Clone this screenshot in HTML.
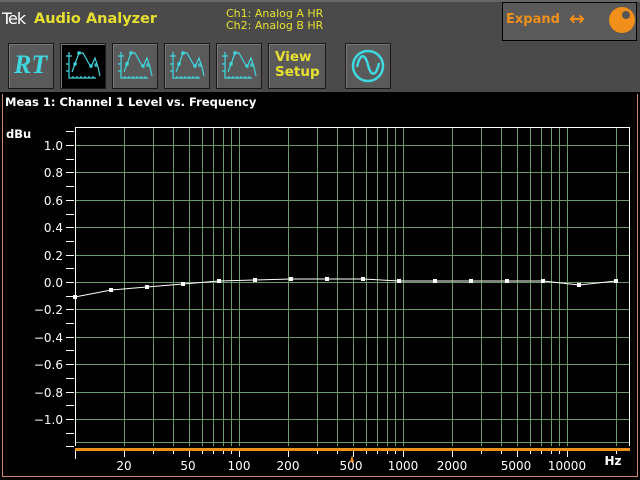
<!DOCTYPE html>
<html><head><style>
body{margin:0;width:640px;height:480px;background:#4a4a4a;overflow:hidden;font-family:"DejaVu Sans","Liberation Sans",sans-serif;position:relative}
.b{position:absolute;top:43px;width:44px;height:44px;background:#5a5a5a;border:1px solid #1a1a1a;box-shadow:inset 1px 1px 0 #777}
.t{position:absolute;color:#e8e030;font-size:12px}
</style></head><body>
<div style="position:absolute;left:0;top:0;width:640px;height:2px;background:#666"></div>
<div style="position:absolute;left:2px;top:9px;color:#fff;font-size:16px;letter-spacing:-1px">Tek</div>
<div class="t" style="left:34px;top:11px;font-size:14.5px;font-weight:bold">Audio Analyzer</div>
<div class="t" style="left:226px;top:8px;line-height:12px;font-size:11px">Ch1: Analog A HR<br>Ch2: Analog B HR</div>
<div style="position:absolute;left:502px;top:2px;width:133px;height:37px;background:#5a5a5a;border:1px solid #000"></div>
<div style="position:absolute;left:506px;top:12px;color:#f0901a;font-size:13px;font-weight:bold">Expand</div>
<div style="position:absolute;left:569px;top:8px;color:#f0901a;font-size:19px;font-weight:bold">↔</div>
<div style="position:absolute;left:609px;top:7px;width:26px;height:26px;border-radius:50%;background:#f0901a"></div>
<div style="position:absolute;left:622px;top:11px;width:8px;height:8px;border-radius:50%;background:#555"></div>

<div class="b" style="left:8px"><div style="position:absolute;left:5px;top:6px;color:#40d8e0;font:italic bold 26px 'Liberation Serif',serif">RT</div></div>
<div class="b" style="left:60px;background:#000"></div>
<div class="b" style="left:112px"></div>
<div class="b" style="left:164px"></div>
<div class="b" style="left:216px"></div>
<div class="b" style="left:268px;width:56px"><div style="position:absolute;left:6px;top:6px;color:#e8e030;font-weight:bold;font-size:13.5px;line-height:15px">View<br>Setup</div></div>
<div class="b" style="left:345px"></div>
<svg width="640" height="100" style="position:absolute;left:0;top:0">
<g fill="none" stroke="#40d8e0" stroke-width="1.2">
<g id="ic"><path d="M69 52V78H96M73 78v-2M77 78v-2M81 78v-2M85 78v-2M89 78v-2M93 78v-2M66 56h6M66 64h3M66 71h3"/><path d="M72 72L75 64 79 53 83 53 88 62 91 67 95 58 98 67 100 76"/><rect x="78" y="52" width="2" height="2"/><rect x="74" y="63" width="2" height="2"/><rect x="90" y="65" width="2" height="2"/><rect x="95" y="64" width="2" height="2"/></g>
<use href="#ic" x="52"/><use href="#ic" x="104"/><use href="#ic" x="156"/>
<circle cx="368" cy="66" r="15" stroke-width="2.5"/><path d="M357 67c3-14 8-14 11-2s8 12 11-2" stroke-width="2.5"/>
</g></svg>

<div style="position:absolute;left:0;top:92px;width:640px;height:388px;background:#000"></div>
<div style="position:absolute;left:2px;top:94px;width:634px;height:382px;border:1px solid #d08a70;border-top:none"></div>
<div style="position:absolute;left:5px;top:95px;color:#fff;font-size:11.5px;font-weight:bold">Meas 1: Channel 1 Level vs. Frequency</div>
<svg width="640" height="480" style="position:absolute;left:0;top:0;font-family:'DejaVu Sans',sans-serif">
<g stroke="#6a9a6a" stroke-width="1">
<path d="M124.5 127V446M153.5 127V446M173.5 127V446M189.5 127V446M202.5 127V446M213.5 127V446M223.5 127V446M231.5 127V446M239.5 127V446M288.5 127V446M317.5 127V446M337.5 127V446M353.5 127V446M366.5 127V446M377.5 127V446M387.5 127V446M395.5 127V446M403.5 127V446M452.5 127V446M481.5 127V446M501.5 127V446M517.5 127V446M530.5 127V446M541.5 127V446M551.5 127V446M559.5 127V446M567.5 127V446M616.5 127V446"/>
<path d="M75 145.5H629M75 172.5H629M75 200.5H629M75 227.5H629M75 255.5H629M75 282.5H629M75 309.5H629M75 337.5H629M75 364.5H629M75 392.5H629M75 419.5H629M75 442.5H629"/>
</g>
<path d="M75.5 446V127.5H629.5V446" fill="none" stroke="#fff"/>
<rect x="75" y="448" width="555" height="3" fill="#f0901a"/>
<g stroke="#fff"><path d="M66 131.5h8M66 145.5h8M66 159.5h8M66 172.5h8M66 186.5h8M66 200.5h8M66 214.5h8M66 227.5h8M66 241.5h8M66 255.5h8M66 268.5h8M66 282.5h8M66 296.5h8M66 309.5h8M66 323.5h8M66 337.5h8M66 350.5h8M66 364.5h8M66 378.5h8M66 392.5h8M66 405.5h8M66 419.5h8M66 433.5h8M66 446.5h8"/>
<path d="M75.5 451v8M124.5 451v6M153.5 451v3M173.5 451v3M189.5 451v6M202.5 451v3M213.5 451v3M223.5 451v3M231.5 451v3M239.5 451v6M288.5 451v6M317.5 451v3M337.5 451v3M353.5 451v6M366.5 451v3M377.5 451v3M387.5 451v3M395.5 451v3M403.5 451v6M452.5 451v6M481.5 451v3M501.5 451v3M517.5 451v6M530.5 451v3M541.5 451v3M551.5 451v3M559.5 451v3M567.5 451v6M616.5 451v3"/></g>
<g fill="#fff" font-size="12" text-anchor="end">
<text x="63" y="150">1.0</text><text x="63" y="177">0.8</text><text x="63" y="205">0.6</text><text x="63" y="232">0.4</text><text x="63" y="260">0.2</text><text x="63" y="287">0.0</text><text x="63" y="314">−0.2</text><text x="63" y="342">−0.4</text><text x="63" y="369">−0.6</text><text x="63" y="397">−0.8</text><text x="63" y="424">−1.0</text>
</g>
<text x="6" y="138" fill="#fff" font-size="11.5" font-weight="bold">dBu</text>
<g fill="#fff" font-size="12" text-anchor="middle">
<text x="124" y="470">20</text><text x="188" y="470">50</text><text x="239" y="470">100</text><text x="288" y="470">200</text><text x="351" y="470">500</text><text x="403" y="470">1000</text><text x="452" y="470">2000</text><text x="516" y="470">5000</text><text x="567" y="470">10000</text>
<text x="613" y="465" font-weight="bold">Hz</text></g>
<path d="M350 462l2-7 2 7z" fill="#f0901a"/>
<polyline fill="none" stroke="#fff" points="75,297 111,290 147,287 183,284 219,281 255,280 291,279 327,279 363,279 399,281 435,281 471,281 507,281 543,281 579,285 616,281"/>
<g fill="#fff"><rect x="73" y="295" width="4" height="4"/><rect x="109" y="288" width="4" height="4"/><rect x="145" y="285" width="4" height="4"/><rect x="181" y="282" width="4" height="4"/><rect x="217" y="279" width="4" height="4"/><rect x="253" y="278" width="4" height="4"/><rect x="289" y="277" width="4" height="4"/><rect x="325" y="277" width="4" height="4"/><rect x="361" y="277" width="4" height="4"/><rect x="397" y="279" width="4" height="4"/><rect x="433" y="279" width="4" height="4"/><rect x="469" y="279" width="4" height="4"/><rect x="505" y="279" width="4" height="4"/><rect x="541" y="279" width="4" height="4"/><rect x="577" y="283" width="4" height="4"/><rect x="614" y="279" width="4" height="4"/></g>
</svg>
</body></html>
